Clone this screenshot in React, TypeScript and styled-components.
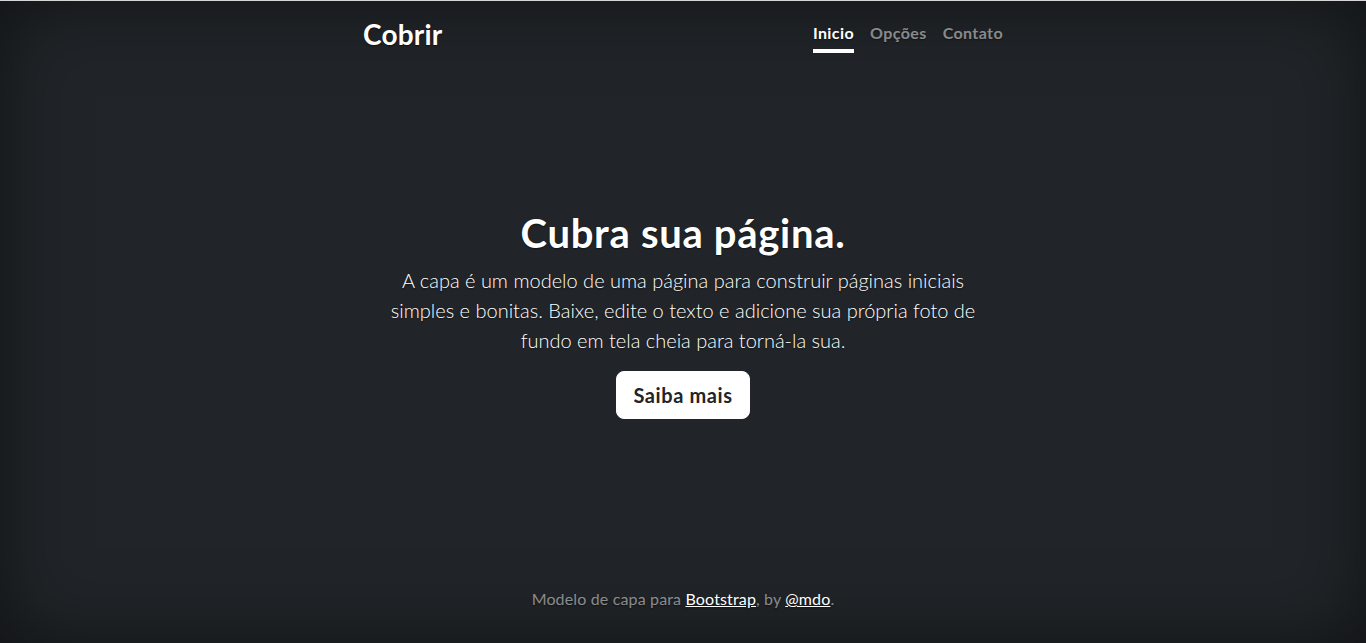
import React from "react";
import styled, { createGlobalStyle } from "styled-components";

const Global = createGlobalStyle`
  html, body, #root { height: 100%; }
  body {
    margin: 0;
    background-color: #212529;
    color: #fff;
    font-family: "Lato", "Noto Sans", sans-serif;
    font-size: 16px;
    line-height: 1.5;
    text-shadow: 0 0.05rem 0.1rem rgba(0, 0, 0, 0.5);
    box-shadow: inset 0 0 5rem rgba(0, 0, 0, 0.5);
    border-top: 1px solid #d6d6d6;
    box-sizing: border-box;
  }
  *, *::before, *::after { box-sizing: border-box; }
`;

const Cover = styled.div`
  display: flex;
  flex-direction: column;
  width: 100%;
  max-width: 42em;
  height: 100%;
  margin: 0 auto;
  padding: 16px;
  text-align: center;
`;

const Header = styled.header`
  display: flex;
  justify-content: space-between;
  align-items: flex-start;
  margin-bottom: auto;
`;

const Brand = styled.h3`
  margin: 0;
  font-size: 28px;
  font-weight: 700;
  line-height: 1.2;
  padding-top: 1px;
  letter-spacing: 0.2px;
`;

const Nav = styled.nav`
  display: flex;
  gap: 16px;
`;

const NavLink = styled.a<{ $active?: boolean }>`
  padding: 4px 0;
  font-weight: 700;
  letter-spacing: 0.4px;
  color: ${(p) => (p.$active ? "#fff" : "rgba(255, 255, 255, 0.5)")};
  text-decoration: none;
  border-bottom: 4px solid ${(p) => (p.$active ? "#fff" : "transparent")};
  cursor: pointer;
`;

const Main = styled.main`
  padding: 0 16px;
`;

const Title = styled.h1`
  margin: 0 0 8px;
  padding-top: 3px;
  font-size: 40px;
  font-weight: 700;
  line-height: 1.2;
  letter-spacing: 0.7px;
`;

const Lead = styled.p`
  margin: 0 0 16px;
  font-size: 20px;
  font-weight: 300;
  line-height: 1.5;
  color: #fff;
`;

const Button = styled.a`
  display: inline-block;
  padding: 8px 16px;
  font-size: 20px;
  font-weight: 700;
  line-height: 1.5;
  letter-spacing: 0.6px;
  color: #212529;
  background: #fff;
  border: 1px solid #fff;
  border-radius: 8px;
  text-shadow: none;
  text-decoration: none;
  cursor: pointer;
`;

const Footer = styled.footer`
  margin-top: auto;
  color: rgba(255, 255, 255, 0.5);
`;

const FooterText = styled.p`
  margin: 0 0 16px;
  letter-spacing: 0.15px;
`;

const FooterLink = styled.a`
  color: #fff;
  text-decoration: underline;
`;

export default function App() {
  return (
    <>
      <Global />
      <Cover>
        <Header>
          <Brand>Cobrir</Brand>
          <Nav>
            <NavLink $active>Inicio</NavLink>
            <NavLink>Opções</NavLink>
            <NavLink>Contato</NavLink>
          </Nav>
        </Header>
        <Main>
          <Title>Cubra sua página.</Title>
          <Lead>
            A capa é um modelo de uma página para construir páginas iniciais
            simples e bonitas. Baixe, edite o texto e adicione sua própria foto
            de fundo em tela cheia para torná-la sua.
          </Lead>
          <Lead>
            <Button>Saiba mais</Button>
          </Lead>
        </Main>
        <Footer>
          <FooterText>
            Modelo de capa para <FooterLink>Bootstrap</FooterLink>, by{" "}
            <FooterLink>@mdo</FooterLink>.
          </FooterText>
        </Footer>
      </Cover>
    </>
  );
}
